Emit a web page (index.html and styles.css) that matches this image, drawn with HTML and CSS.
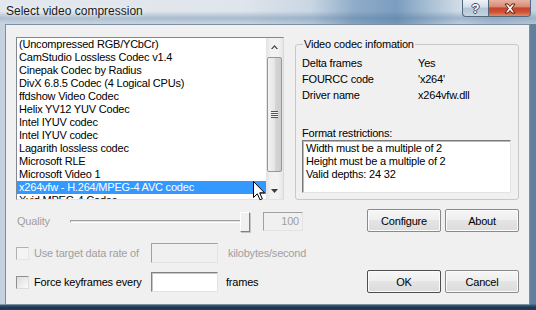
FILE: index.html
```html
<!DOCTYPE html>
<html lang="en">
<head>
  <meta charset="UTF-8" />
  <title>Select video compression</title>
  <link rel="stylesheet" href="styles.css">
</head>
<body>

<div class="window">
  <div class="titlebar">
    <span class="title">Select video compression</span>
    <div class="caption-buttons">
      <div class="cap help">?</div>
      <div class="cap close">
        <svg width="14" height="11" viewBox="0 0 14 11">
          <path d="M2 1 L5 1 L7 3.5 L9 1 L12 1 L8.6 5.5 L12 10 L9 10 L7 7.5 L5 10 L2 10 L5.4 5.5 Z" fill="#fff" stroke="#5a1d12" stroke-width="1" stroke-linejoin="round"/>
        </svg>
      </div>
    </div>
  </div>

  <div class="client">
    <div class="top">
      <div class="listbox">
        <ul class="items">
          <li>(Uncompressed RGB/YCbCr)</li>
          <li>CamStudio Lossless Codec v1.4</li>
          <li>Cinepak Codec by Radius</li>
          <li>DivX 6.8.5 Codec (4 Logical CPUs)</li>
          <li>ffdshow Video Codec</li>
          <li>Helix YV12 YUV Codec</li>
          <li>Intel IYUV codec</li>
          <li>Intel IYUV codec</li>
          <li>Lagarith lossless codec</li>
          <li>Microsoft RLE</li>
          <li>Microsoft Video 1</li>
          <li class="selected">x264vfw - H.264/MPEG-4 AVC codec</li>
          <li>Xvid MPEG-4 Codec</li>
        </ul>
        <div class="scrollbar">
          <div class="arrow">
            <svg width="7" height="4" viewBox="0 0 7 4"><path d="M0 4 L3.5 0 L7 4 L5.5 4 L3.5 1.8 L1.5 4 Z" fill="#3c3c3c"/></svg>
          </div>
          <div class="thumb">
            <span class="grip"></span>
          </div>
          <div class="arrow bottom-arrow">
            <svg width="7" height="4" viewBox="0 0 7 4"><path d="M0 0 L7 0 L3.5 4 Z" fill="#3c3c3c"/></svg>
          </div>
        </div>
      </div>

      <fieldset class="info">
        <legend>Video codec infomation</legend>
        <div class="props">
          <span>Delta frames</span><span>Yes</span>
          <span>FOURCC code</span><span>'x264'</span>
          <span>Driver name</span><span>x264vfw.dll</span>
        </div>
        <div class="restrict-label">Format restrictions:</div>
        <div class="restrict-box">
          <div>Width must be a multiple of 2</div>
          <div>Height must be a multiple of 2</div>
          <div>Valid depths: 24 32</div>
        </div>
      </fieldset>
    </div>

    <div class="bottom">
      <div class="options">
        <div class="quality-row">
          <span class="q-label disabled">Quality</span>
          <div class="slider">
            <div class="track"></div>
            <div class="slider-thumb"></div>
          </div>
          <div class="value-box">100</div>
        </div>
        <div class="check-row first">
          <span class="checkbox off"></span>
          <span class="check-label disabled">Use target data rate of</span>
          <span class="text-input off"></span>
          <span class="unit disabled">kilobytes/second</span>
        </div>
        <div class="check-row">
          <span class="checkbox"></span>
          <span class="check-label">Force keyframes every</span>
          <span class="text-input"></span>
          <span class="unit frames">frames</span>
        </div>
      </div>

      <div class="actions">
        <div class="btn-row">
          <button class="btn">Configure</button>
          <button class="btn">About</button>
        </div>
        <div class="btn-row">
          <button class="btn default">OK</button>
          <button class="btn">Cancel</button>
        </div>
      </div>
    </div>
  </div>

  <svg class="cursor" width="13" height="20" viewBox="0 0 13 20">
    <path d="M0.5 0.5 L0.5 16.5 L4.3 12.8 L7 18.8 L9.3 17.8 L6.7 11.8 L11.5 11.8 Z" fill="#fff" stroke="#000" stroke-width="1" stroke-linejoin="round"/>
  </svg>
</div>

</body>
</html>
```

FILE: styles.css
```css
body {
  margin: 0;
  font-family: 'Liberation Sans', Arial, sans-serif;
  font-size: 11px;
  letter-spacing: -0.2px;
  color: #000;
}

.window {
  width: 536px;
  height: 310px;
  position: relative;
  overflow: hidden;
  background:
    linear-gradient(to bottom, transparent 304px, #3a5a7a 305px, #1d324a 308px, #24405e 310px),
    linear-gradient(90deg, #c4d2df 0, #c9d6e2 50%, #88a6c2 70%, #5f7f9d 100%);
}

/* title bar */
.titlebar {
  height: 24px;
  display: flex;
  align-items: flex-start;
  background:
    linear-gradient(to bottom, transparent 11px, rgba(70, 110, 150, 0.35) 18px, rgba(70, 110, 150, 0.15) 24px),
    linear-gradient(90deg, #e3e8ee 0, #dfe5ec 45%, #c9d6e3 58%, #8fadc9 66%, #7b9dbf 74%, #a8bfd4 80%, #d2dde8 86%, #b7c9da 92%, #c8d5e1 100%);
}

.title {
  padding-left: 6px;
  line-height: 23px;
  font-size: 12px;
  letter-spacing: 0;
  color: #1b1b1b;
  text-shadow: 0 0 6px rgba(255, 255, 255, 0.9);
}

.caption-buttons {
  display: flex;
  margin-left: auto;
  margin-right: 5px;
}

.cap {
  height: 17px;
  box-sizing: border-box;
  border: 1px solid #55677b;
  border-top: none;
  display: flex;
  align-items: center;
  justify-content: center;
}

.help {
  width: 26px;
  border-right: none;
  border-radius: 0 0 0 4px;
  background: linear-gradient(#eef2f6, #d3dde8 45%, #b3c4d5 50%, #c6d4e1 100%);
  color: #fff;
  font-weight: bold;
  font-size: 13px;
  letter-spacing: 0;
  text-shadow: -1px 0 #3d4c5c, 1px 0 #3d4c5c, 0 -1px #3d4c5c, 0 1px #3d4c5c;
}

.close {
  width: 43px;
  border-radius: 0 0 4px 0;
  background: linear-gradient(#eab2a3, #d98b73 42%, #c5442b 50%, #cf5034 75%, #e08a68 100%);
}

/* client area */
.client {
  margin-left: 5px;
  width: 525px;
  height: 281px;
  box-sizing: border-box;
  border: 1px solid #7c8fa3;
  background: #f0f0f0;
  padding: 12px 10px 0 10px;
}

.top {
  display: flex;
  align-items: flex-start;
  gap: 11px;
}

.listbox {
  width: 268px;
  height: 163px;
  box-sizing: border-box;
  display: flex;
  background: #fff;
  border: 1px solid;
  border-color: #828790 #d8d8d8 #e3e3e3 #828790;
}

.items {
  flex: 1;
  margin: 0;
  padding: 0;
  list-style: none;
  overflow: hidden;
}

.items li {
  height: 13px;
  line-height: 13px;
  padding-left: 2px;
  white-space: nowrap;
}

.items li.selected {
  background: #3399ff;
  color: #fff;
}

.scrollbar {
  width: 17px;
  display: flex;
  flex-direction: column;
  background: linear-gradient(90deg, #e3e3e3, #f2f2f2 30%, #f2f2f2 70%, #e6e6e6);
}

.arrow {
  height: 17px;
  display: flex;
  align-items: center;
  justify-content: center;
}

.bottom-arrow {
  margin-top: auto;
}

.thumb {
  margin: 2px 1px 0 1px;
  height: 115px;
  box-sizing: border-box;
  border: 1px solid #979797;
  border-radius: 2px;
  background: linear-gradient(90deg, #f2f2f2, #e6e6e6 50%, #d6d6d6 51%, #cdcdcd);
  display: flex;
  align-items: center;
  justify-content: center;
}

.grip {
  width: 7px;
  height: 7px;
  background: repeating-linear-gradient(#555 0, #555 1px, #f4f4f4 1px, #f4f4f4 2px);
}

/* codec information group */
.info {
  width: 224px;
  height: 163px;
  box-sizing: border-box;
  margin: 0;
  padding: 0 6px;
  min-width: 0;
  border: 1px solid #c5c9cc;
  border-radius: 3px;
}

.info legend {
  padding: 0 1px;
  margin-left: 1px;
  line-height: 14px;
}

.props {
  display: grid;
  grid-template-columns: 116px 1fr;
  line-height: 16px;
  margin-top: 4px;
}

.restrict-label {
  margin-top: 23px;
  line-height: 14px;
}

.restrict-box {
  width: 209px;
  height: 53px;
  box-sizing: border-box;
  padding: 1px 3px;
  line-height: 13px;
  background: #fff;
  border: 1px solid;
  border-color: #7a7a7a #e3e3e3 #e3e3e3 #7a7a7a;
  box-shadow: inset 1px 1px #b9b9b9;
}

/* lower controls */
.bottom {
  display: flex;
  justify-content: space-between;
  margin-top: 9px;
}

.disabled {
  color: #a0a0a0;
}

.quality-row {
  display: flex;
  align-items: center;
  height: 24px;
}

.q-label {
  width: 53px;
  padding-left: 1px;
}

.slider {
  position: relative;
  width: 186px;
  height: 24px;
  display: flex;
  align-items: center;
}

.track {
  width: 180px;
  height: 3px;
  box-sizing: border-box;
  border: 1px solid;
  border-color: #a0a0a0 #fff #fff #a0a0a0;
  background: #e3e3e3;
}

.slider-thumb {
  position: absolute;
  left: 170px;
  top: 3px;
  width: 10px;
  height: 20px;
  box-sizing: border-box;
  border: 1px solid;
  border-color: #fff #808080 #808080 #fff;
  box-shadow: 1px 1px #c4c4c4;
  background: #f0f0f0;
}

.value-box {
  margin-left: 7px;
  width: 40px;
  height: 19px;
  box-sizing: border-box;
  padding-right: 3px;
  text-align: right;
  line-height: 17px;
  color: #a0a0a0;
  border: 1px solid;
  border-color: #a0a0a0 #e3e3e3 #e3e3e3 #a0a0a0;
}

.check-row {
  display: flex;
  align-items: center;
  height: 20px;
  margin-top: 9px;
}

.check-row.first {
  margin-top: 10px;
}

.checkbox {
  width: 13px;
  height: 13px;
  box-sizing: border-box;
  margin-right: 5px;
  border: 1px solid;
  border-color: #8e8f8f #dcdcdc #dcdcdc #8e8f8f;
  background: linear-gradient(135deg, #dcdcdc, #fbfbfb);
}

.checkbox.off {
  border-color: #b1b1b1 #e6e6e6 #e6e6e6 #b1b1b1;
  background: #f4f4f4;
}

.check-label {
  width: 117px;
  white-space: nowrap;
}

.text-input {
  width: 67px;
  height: 20px;
  box-sizing: border-box;
  background: #fff;
  border: 1px solid;
  border-color: #828282 #e3e3e3 #e3e3e3 #828282;
  box-shadow: inset 1px 1px #c6c6c6;
}

.text-input.off {
  background: #f0f0f0;
  border-color: #a0a0a0 #e3e3e3 #e3e3e3 #a0a0a0;
  box-shadow: none;
}

.unit {
  margin-left: 10px;
}

.unit.frames {
  margin-left: 8px;
}

.actions {
  width: 152px;
  height: 84px;
  display: flex;
  flex-direction: column;
  justify-content: space-between;
}

.btn-row {
  display: flex;
  gap: 4px;
}

.btn {
  width: 74px;
  height: 23px;
  padding: 0;
  font: inherit;
  letter-spacing: inherit;
  color: #000;
  border: 1px solid #8a8a8a;
  border-radius: 2px;
  background: linear-gradient(#f6f6f6, #eeeeee 50%, #e4e4e4 50%, #dcdcdc);
  box-shadow: inset 0 0 0 1px #fbfbfb;
}

.btn.default {
  border-color: #4d4d4d;
}

.cursor {
  position: absolute;
  left: 253px;
  top: 181px;
}
```
